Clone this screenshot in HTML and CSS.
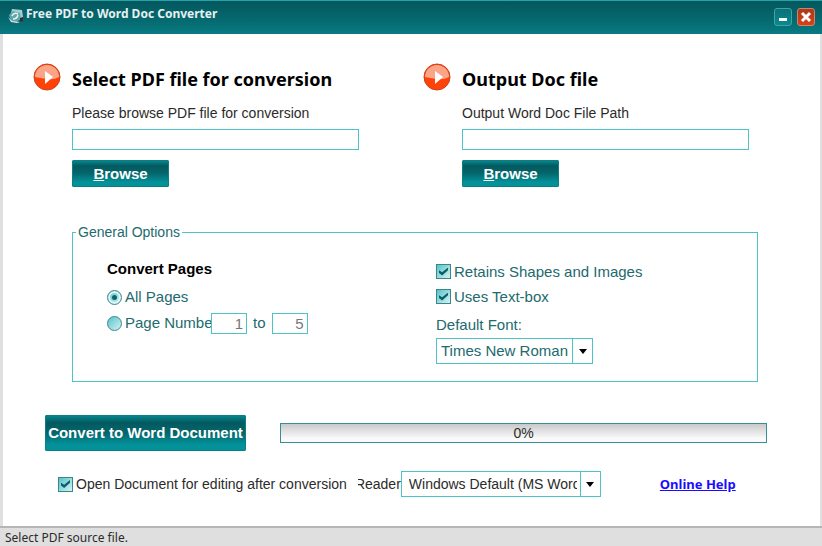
FILE: index.html
```
<!DOCTYPE html>
<html lang="en">
<head>
    <meta charset="UTF-8">
    <meta name="viewport" content="width=device-width, initial-scale=1.0">
    <title>Free PDF to Word Doc Converter</title>
    <link rel="stylesheet" href="styles.css">
</head>
<body>

    <!-- Title bar -->
    <header class="titlebar">
        <svg class="app-icon" viewBox="0 0 16 16" aria-hidden="true">
            <path d="M4 1l10 1 1 7-4 3-9-3z" fill="#a9cdd0"/>
            <path d="M1 7l4-4 7 2 1 6-5 3-5-1z" fill="#5fa5ac"/>
            <path d="M4 8q2-4 6-2M5 11q4 0 5-4" stroke="#e4f4f5" stroke-width="1.5" fill="none"/>
            <path d="M0 9l4 4 8 1-3 1-6-1z" fill="#dbe6e7"/>
            <path d="M12 10l3-1v4l-3 1z" fill="#3a2c2c"/>
        </svg>
        <h1>Free PDF to Word Doc Converter</h1>
        <div class="window-buttons">
            <button type="button" class="win-btn" aria-label="Minimize">
                <svg viewBox="0 0 16 16"><path d="M4 9h8v3H4z" fill="#fff"/></svg>
            </button>
            <button type="button" class="win-btn close" aria-label="Close">
                <svg viewBox="0 0 16 16"><path d="M4 4l8 8M12 4l-8 8" stroke="#fff" stroke-width="3"/></svg>
            </button>
        </div>
    </header>

    <main class="window-body">
        <!-- Input and output files -->
        <div class="files">
            <section class="file-block">
                <svg class="arrow-icon" viewBox="0 0 28 28" aria-hidden="true">
                    <circle cx="14" cy="14" r="13" fill="#ff4208" stroke="#c9421c"/>
                    <path d="M2 14a12 12 0 0 1 24 0q-5 3-12 2t-12-2z" fill="#fba488"/>
                    <path d="M12 8l8 6-8 7z" fill="#fff"/>
                </svg>
                <div class="file-form">
                    <h2>Select PDF file for conversion</h2>
                    <label for="pdfFile">Please browse PDF file for conversion</label>
                    <input type="text" id="pdfFile" class="path">
                    <button type="button" class="btn browse"><u>B</u>rowse</button>
                </div>
            </section>
            <section class="file-block">
                <svg class="arrow-icon" viewBox="0 0 28 28" aria-hidden="true">
                    <circle cx="14" cy="14" r="13" fill="#ff4208" stroke="#c9421c"/>
                    <path d="M2 14a12 12 0 0 1 24 0q-5 3-12 2t-12-2z" fill="#fba488"/>
                    <path d="M12 8l8 6-8 7z" fill="#fff"/>
                </svg>
                <div class="file-form">
                    <h2>Output Doc file</h2>
                    <label for="docFile">Output Word Doc File Path</label>
                    <input type="text" id="docFile" class="path">
                    <button type="button" class="btn browse"><u>B</u>rowse</button>
                </div>
            </section>
        </div>

        <!-- General options -->
        <fieldset class="options">
            <legend>General Options</legend>
            <div class="options-grid">
                <div class="pages">
                    <h3>Convert Pages</h3>
                    <div class="row">
                        <input type="radio" name="pages" id="allPages" checked>
                        <label for="allPages">All Pages</label>
                    </div>
                    <div class="row">
                        <input type="radio" name="pages" id="pageNumber">
                        <label for="pageNumber" class="page-label">Page Number</label>
                        <input type="text" class="num" value="1" aria-label="From page">
                        <label for="toPage" class="to">to</label>
                        <input type="text" class="num" id="toPage" value="5">
                    </div>
                </div>
                <div class="format">
                    <div class="row">
                        <input type="checkbox" id="shapes" checked>
                        <label for="shapes">Retains Shapes and Images</label>
                    </div>
                    <div class="row">
                        <input type="checkbox" id="textbox" checked>
                        <label for="textbox">Uses Text-box</label>
                    </div>
                    <label for="font" class="font-label">Default Font:</label>
                    <div class="dropdown">
                        <select id="font">
                            <option>Times New Roman</option>
                            <option>Arial</option>
                        </select>
                        <span class="drop"></span>
                    </div>
                </div>
            </div>
        </fieldset>

        <!-- Convert button and progress -->
        <div class="convert-row">
            <button type="button" class="btn convert">Convert to Word Document</button>
            <div class="progress" role="progressbar" aria-label="Conversion" aria-valuenow="0" aria-valuemin="0" aria-valuemax="100">0%</div>
        </div>

        <div class="after-row">
            <input type="checkbox" id="openDoc" checked>
            <label for="openDoc">Open Document for editing after conversion</label>
            <label for="reader" class="reader-label">Reader</label>
            <div class="dropdown reader">
                <select id="reader">
                    <option>Windows Default (MS Word)</option>
                </select>
                <span class="drop"></span>
            </div>
            <a href="#" class="help">Online Help</a>
        </div>
    </main>

    <footer class="statusbar">Select PDF source file.</footer>

</body>
</html>
```
FILE: styles.css
```
* {
    box-sizing: border-box;
}

body {
    margin: 0;
    min-height: 100vh;
    display: flex;
    flex-direction: column;
    background: #fff;
    font-family: "Liberation Sans", Arial, sans-serif;
    font-size: 14px;
    line-height: 20px;
    color: #2b2b2b;
}

h1, h2, h3 {
    margin: 0;
}

input, select, button {
    font: inherit;
    margin: 0;
}

/* Title bar */
.titlebar {
    display: flex;
    align-items: center;
    height: 34px;
    padding: 0 7px 2px 8px;
    border-top: 1px solid #1fa5ab;
    background: linear-gradient(#04575d, #056a70 60%, #087c82);
}

.app-icon {
    width: 16px;
    height: 16px;
    margin: 0 2px 2px 0;
}

.titlebar h1 {
    flex: 1;
    padding-bottom: 6px;
    font-family: "Noto Sans", sans-serif;
    font-size: 12px;
    color: #e6f0f0;
}

.window-buttons {
    display: flex;
    gap: 5px;
}

.win-btn {
    width: 18px;
    height: 18px;
    padding: 0;
    border: 1px solid #3fa3a8;
    border-radius: 3px;
    background: linear-gradient(#0b7076, #098a90);
}

.win-btn svg {
    display: block;
    width: 16px;
    height: 16px;
}

.win-btn.close {
    border-color: #c9866f;
    background: linear-gradient(#a83a1c, #dc3f16);
}

/* Body */
.window-body {
    flex: 1;
    padding: 29px 7px 0 30px;
    border: solid #e0e0e0;
    border-width: 0 2px 0 3px;
}

.files {
    display: grid;
    grid-template-columns: 1fr 1fr;
}

.file-block {
    display: flex;
    gap: 11px;
}

.arrow-icon {
    width: 28px;
    height: 28px;
    flex: none;
}

.file-form {
    display: flex;
    flex-direction: column;
    align-items: flex-start;
    width: 287px;
}

.file-form h2 {
    margin: 4px 0 12px;
    font-family: "Noto Sans", sans-serif;
    font-size: 18px;
    line-height: 24px;
    white-space: nowrap;
    color: #000;
}

.path {
    width: 100%;
    height: 21px;
    margin: 6px 0 10px;
    padding: 0 4px;
    border: 1px solid #4cc3c9;
}

.btn {
    padding: 0;
    border: 1px solid #0c7f85;
    border-radius: 1px;
    background: linear-gradient(#07858b, #03595f 20%, #04676c 50%, #03929a 85%);
    color: #fff;
    font-size: 15px;
    font-weight: bold;
}

.browse {
    width: 97px;
    height: 27px;
}

/* General options */
.options {
    margin: 35px 55px 0 39px;
    padding: 0;
    border: 1px solid #4cc3c9;
    font-size: 15px;
    color: #226a6e;
}

.options legend {
    margin-left: 3px;
    padding: 0 2px;
    font-size: 14px;
}

.options-grid {
    display: grid;
    grid-template-columns: 329px 1fr;
    height: 139px;
    padding: 17px 0 0 34px;
}

.options h3 {
    margin-bottom: 5px;
    font-size: 15px;
    color: #000;
}

.row {
    display: flex;
    align-items: center;
    gap: 3px;
    height: 26px;
}

.format .row {
    height: 25px;
}

input[type="radio"], input[type="checkbox"] {
    appearance: none;
    flex: none;
    display: grid;
    place-items: center;
    width: 15px;
    height: 15px;
    border: 1px solid #3c868b;
    background: linear-gradient(135deg, #55c3c9, #d5f3f4);
}

input[type="radio"] {
    border-radius: 50%;
}

input[type="radio"]:checked {
    box-shadow: inset 0 0 0 2px #e2f6f7;
}

input[type="radio"]:checked::after {
    content: "";
    width: 5px;
    height: 5px;
    border-radius: 50%;
    background: #0d646a;
}

input[type="checkbox"]:checked::after {
    content: "";
    width: 9px;
    height: 8px;
    background: #0b5f66;
    clip-path: polygon(0 35%, 35% 60%, 100% 0, 100% 35%, 35% 100%, 0 70%);
}

.page-label {
    width: 86px;
    margin-right: -3px;
    overflow: hidden;
    white-space: nowrap;
}

.num {
    width: 36px;
    height: 21px;
    padding: 0 3px;
    border: 1px solid #4cc3c9;
    text-align: right;
    color: #777;
}

.to {
    margin: 0 3px;
}

.font-label {
    display: block;
    margin: 6px 0 3px;
}

.dropdown {
    position: relative;
    width: 157px;
}

.dropdown select {
    appearance: none;
    display: block;
    width: 100%;
    height: 26px;
    padding: 0 20px 0 4px;
    border: 1px solid #4cc3c9;
    border-radius: 0;
    background: #fff;
    color: inherit;
}

.drop {
    position: absolute;
    top: 0;
    right: 0;
    display: grid;
    place-items: center;
    width: 21px;
    height: 100%;
    border: 1px solid #4cc3c9;
    pointer-events: none;
}

.drop::after {
    content: "";
    border: solid transparent;
    border-width: 5px 4px 0;
    border-top-color: #000;
}

/* Convert button and progress */
.convert-row {
    display: flex;
    align-items: center;
    gap: 34px;
    margin: 33px 46px 0 12px;
}

.convert {
    width: 201px;
    height: 36px;
    white-space: nowrap;
}

.progress {
    flex: 1;
    height: 20px;
    border: 1px solid #368f95;
    background: linear-gradient(#c9c9c9, #fafafa 80%);
    line-height: 18px;
    text-align: center;
}

/* Open after conversion */
.after-row {
    display: flex;
    align-items: center;
    margin: 20px 0 0 25px;
    white-space: nowrap;
}

.after-row label {
    margin-left: 3px;
}

.after-row .reader-label {
    display: flex;
    justify-content: flex-end;
    width: 43px;
    margin-left: 11px;
    overflow: hidden;
}

.reader {
    width: 200px;
}

.reader select {
    padding: 0 23px 0 7px;
}

.help {
    margin-left: 59px;
    font-family: "Noto Sans", sans-serif;
    font-size: 13px;
    font-weight: bold;
    color: #1a0dff;
}

/* Status bar */
.statusbar {
    height: 20px;
    padding: 0 5px;
    border-top: 2px solid #b5b5b5;
    background: #dfdfdf;
    font-family: "Noto Sans", sans-serif;
    font-size: 12px;
}
```
